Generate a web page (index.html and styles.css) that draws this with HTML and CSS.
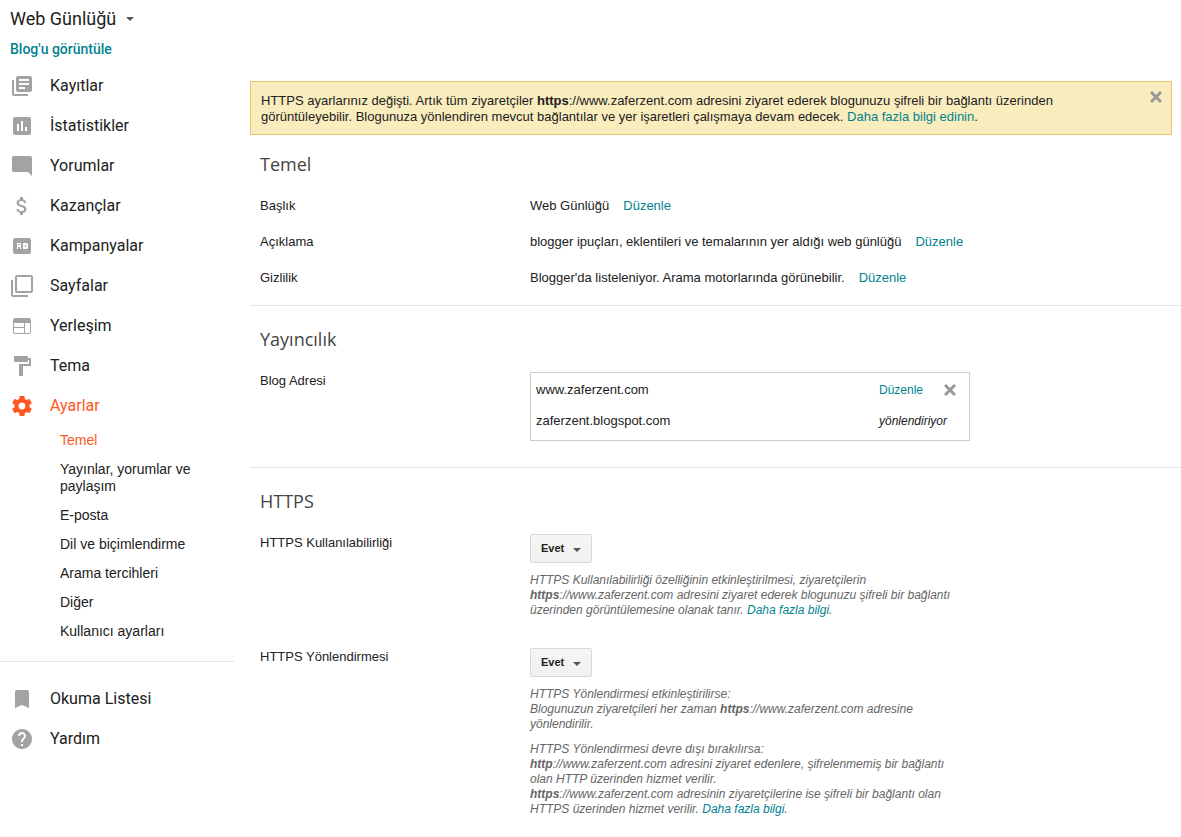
FILE: index.html
```html
<!DOCTYPE html>
<html lang="tr">
<head>
    <meta charset="UTF-8">
    <meta name="viewport" content="width=device-width, initial-scale=1">
    <title>Web Günlüğü - Ayarlar</title>
    <link rel="stylesheet" href="styles.css">
</head>
<body>
<div class="page">
    <!-- sol menü -->
    <aside class="sidebar">
        <button type="button" class="blog-switch">Web Günlüğü<span class="caret"></span></button>
        <a class="view-blog" href="#">Blog'u görüntüle</a>
        <nav>
            <ul class="menu">
                <li><a href="#">
                    <svg class="icon" viewBox="0 0 24 24"><path d="M4 6H2v14c0 1.100.9 2 2 2h14v-2H4V6zm16-4H8c-1.100 0-2 .9-2 2v12c0 1.100.9 2 2 2h12c1.100 0 2-.9 2-2V4c0-1.100-.9-2-2-2zm-1 9H9V9h10v2zm-4 4H9v-2h6v2zm4-8H9V5h10v2z"/></svg>
                    Kayıtlar</a></li>
                <li><a href="#">
                    <svg class="icon" viewBox="0 0 24 24"><path d="M19 3H5c-1.100 0-2 .9-2 2v14c0 1.100.9 2 2 2h14c1.100 0 2-.9 2-2V5c0-1.100-.9-2-2-2zM9 17H7v-7h2v7zm4 0h-2V7h2v10zm4 0h-2v-4h2v4z"/></svg>
                    İstatistikler</a></li>
                <li><a href="#">
                    <svg class="icon" viewBox="0 0 24 24"><path d="M22 4c0-1.100-.9-2-2-2H4c-1.100 0-2 .9-2 2v12c0 1.100.9 2 2 2h14l4 4z"/></svg>
                    Yorumlar</a></li>
                <li><a href="#">
                    <svg class="icon" viewBox="0 0 24 24"><path d="M11.800 10.900c-2.270-.59-3-1.200-3-2.150 0-1.090 1.010-1.850 2.700-1.850 1.780 0 2.440.85 2.500 2.100h2.210c-.07-1.720-1.120-3.300-3.210-3.810V3h-3v2.160c-1.940.42-3.500 1.680-3.500 3.610 0 2.310 1.910 3.460 4.700 4.130 2.500.6 3 1.480 3 2.410 0 .69-.49 1.790-2.700 1.790-2.060 0-2.870-.92-2.980-2.100h-2.200c.12 2.190 1.760 3.420 3.680 3.830V21h3v-2.150c1.950-.37 3.500-1.500 3.500-3.550 0-2.840-2.430-3.810-4.700-4.400z"/></svg>
                    Kazançlar</a></li>
                <li><a href="#">
                    <svg class="icon" viewBox="0 0 24 24"><path fill-rule="evenodd" d="M5 4h14a2 2 0 0 1 2 2v12a2 2 0 0 1-2 2H5a2 2 0 0 1-2-2V6a2 2 0 0 1 2-2zM7 9v6h1v-2h2v2h1V9zm1 1h2v1H8zM13 9v6h4l1-1v-4l-1-1zm2 2h1v2h-1z"/></svg>
                    Kampanyalar</a></li>
                <li><a href="#">
                    <svg class="icon" viewBox="0 0 24 24"><path d="M3 6H1v15c0 1.100.9 2 2 2h15v-2H3V6zM21 1H7c-1.100 0-2 .9-2 2v14c0 1.100.9 2 2 2h14c1.100 0 2-.9 2-2V3c0-1.100-.9-2-2-2zm0 16H7V3h14v14z"/></svg>
                    Sayfalar</a></li>
                <li><a href="#">
                    <svg class="icon" viewBox="0 0 24 24"><path fill-rule="evenodd" d="M19 4H5a2 2 0 0 0-2 2v12a2 2 0 0 0 2 2h14a2 2 0 0 0 2-2V6a2 2 0 0 0-2-2zM4 9h10v4H4zm0 5h10v5H5l-1-1zm11-5h5v9l-1 1h-4z"/></svg>
                    Yerleşim</a></li>
                <li><a href="#">
                    <svg class="icon" viewBox="0 0 24 24"><path d="M18 4V3c0-.55-.45-1-1-1H5c-.55 0-1 .45-1 1v4c0 .55.45 1 1 1h12c.55 0 1-.45 1-1V6h1v4H9v11c0 .55.45 1 1 1h2c.55 0 1-.45 1-1v-9h8V4h-3z"/></svg>
                    Tema</a></li>
                <li class="current"><a href="#">
                    <svg class="icon" viewBox="0 0 24 24"><path d="M19.430 12.980c.04-.32.07-.64.07-.98s-.03-.66-.07-.98l2.110-1.650c.19-.15.24-.42.12-.64l-2-3.460c-.12-.22-.39-.3-.61-.22l-2.490 1c-.52-.4-1.080-.73-1.690-.98l-.38-2.650C14.460 2.180 14.250 2 14 2h-4c-.25 0-.46.18-.49.42l-.38 2.650c-.61.25-1.170.59-1.690.98l-2.490-1c-.23-.09-.49 0-.61.22l-2 3.460c-.13.22-.07.49.12.64l2.110 1.650c-.04.32-.07.65-.07.98s.03.66.07.98l-2.110 1.650c-.19.15-.24.42-.12.64l2 3.460c.12.22.39.3.61.22l2.490-1c.52.4 1.080.73 1.690.98l.38 2.650c.03.24.24.42.49.42h4c.25 0 .46-.18.49-.42l.38-2.650c.61-.25 1.170-.59 1.690-.98l2.490 1c.23.09.49 0 .61-.22l2-3.460c.12-.22.07-.49-.12-.64l-2.110-1.650zM12 15.500c-1.930 0-3.500-1.570-3.500-3.500s1.570-3.500 3.500-3.500 3.500 1.570 3.500 3.500-1.570 3.500-3.500 3.500z"/></svg>
                    Ayarlar</a>
                    <ul class="submenu">
                        <li class="current"><a href="#">Temel</a></li>
                        <li><a href="#">Yayınlar, yorumlar ve paylaşım</a></li>
                        <li><a href="#">E-posta</a></li>
                        <li><a href="#">Dil ve biçimlendirme</a></li>
                        <li><a href="#">Arama tercihleri</a></li>
                        <li><a href="#">Diğer</a></li>
                        <li><a href="#">Kullanıcı ayarları</a></li>
                    </ul>
                </li>
            </ul>
            <ul class="menu menu-extra">
                <li><a href="#">
                    <svg class="icon" viewBox="0 0 24 24"><path d="M17 3H7c-1.100 0-2 .9-2 2v16l7-3 7 3V5c0-1.100-.9-2-2-2z"/></svg>
                    Okuma Listesi</a></li>
                <li><a href="#">
                    <svg class="icon" viewBox="0 0 24 24"><path d="M12 2C6.480 2 2 6.480 2 12s4.480 10 10 10 10-4.480 10-10S17.520 2 12 2zm1 17h-2v-2h2v2zm2.070-7.750l-.9.920C13.450 12.900 13 13.500 13 15h-2v-.5c0-1.100.45-2.100 1.170-2.830l1.240-1.260c.37-.36.59-.86.59-1.410 0-1.100-.9-2-2-2s-2 .9-2 2H8c0-2.210 1.790-4 4-4s4 1.790 4 4c0 .88-.36 1.680-.93 2.250z"/></svg>
                    Yardım</a></li>
            </ul>
        </nav>
    </aside>

    <!-- ayarlar -->
    <main class="content">
        <div class="notice">
            <p>HTTPS ayarlarınız değişti. Artık tüm ziyaretçiler <b>https</b>://www.zaferzent.com adresini ziyaret ederek blogunuzu şifreli bir bağlantı üzerinden görüntüleyebilir. Blogunuza yönlendiren mevcut bağlantılar ve yer işaretleri çalışmaya devam edecek. <a href="#">Daha fazla bilgi edinin</a>.</p>
            <button type="button" class="close" aria-label="Kapat"><svg viewBox="0 0 12 12"><path d="M1 1l10 10M11 1L1 11"/></svg></button>
        </div>

        <section class="group">
            <h2>Temel</h2>
            <div class="row">
                <div class="label">Başlık</div>
                <div class="value">Web Günlüğü<a class="edit" href="#">Düzenle</a></div>
            </div>
            <div class="row">
                <div class="label">Açıklama</div>
                <div class="value">blogger ipuçları, eklentileri ve temalarının yer aldığı web günlüğü<a class="edit" href="#">Düzenle</a></div>
            </div>
            <div class="row">
                <div class="label">Gizlilik</div>
                <div class="value">Blogger'da listeleniyor. Arama motorlarında görünebilir.<a class="edit" href="#">Düzenle</a></div>
            </div>
        </section>

        <section class="group">
            <h2>Yayıncılık</h2>
            <div class="row">
                <div class="label">Blog Adresi</div>
                <div class="control">
                    <table class="address">
                        <tr>
                            <td>www.zaferzent.com</td>
                            <td class="action"><span class="tools"><a href="#">Düzenle</a><button type="button" class="close" aria-label="Kaldır"><svg viewBox="0 0 12 12"><path d="M1 1l10 10M11 1L1 11"/></svg></button></span></td>
                        </tr>
                        <tr>
                            <td>zaferzent.blogspot.com</td>
                            <td class="action"><i>yönlendiriyor</i></td>
                        </tr>
                    </table>
                </div>
            </div>
        </section>

        <section class="group">
            <h2>HTTPS</h2>
            <div class="row">
                <label class="label" for="https-on">HTTPS Kullanılabilirliği</label>
                <div class="control">
                    <div class="select">
                        <select id="https-on"><option>Evet</option><option>Hayır</option></select>
                        <span class="caret"></span>
                    </div>
                    <div class="help">
                        <p>HTTPS Kullanılabilirliği özelliğinin etkinleştirilmesi, ziyaretçilerin <b>https</b>://www.zaferzent.com adresini ziyaret ederek blogunuzu şifreli bir bağlantı üzerinden görüntülemesine olanak tanır. <a href="#">Daha fazla bilgi</a>.</p>
                    </div>
                </div>
            </div>
            <div class="row">
                <label class="label" for="https-redirect">HTTPS Yönlendirmesi</label>
                <div class="control">
                    <div class="select">
                        <select id="https-redirect"><option>Evet</option><option>Hayır</option></select>
                        <span class="caret"></span>
                    </div>
                    <div class="help">
                        <p>HTTPS Yönlendirmesi etkinleştirilirse:<br>
                        Blogunuzun ziyaretçileri her zaman <b>https</b>://www.zaferzent.com adresine yönlendirilir.</p>
                        <p>HTTPS Yönlendirmesi devre dışı bırakılırsa:<br>
                        <b>http</b>://www.zaferzent.com adresini ziyaret edenlere, şifrelenmemiş bir bağlantı olan HTTP üzerinden hizmet verilir.<br>
                        <b>https</b>://www.zaferzent.com adresinin ziyaretçilerine ise şifreli bir bağlantı olan HTTPS üzerinden hizmet verilir. <a href="#">Daha fazla bilgi</a>.</p>
                    </div>
                </div>
            </div>
        </section>
    </main>
</div>
</body>
</html>
```
FILE: styles.css
```css
*{
    margin: 0;
    padding: 0;
    box-sizing: border-box;
}
body{
    background: #fff;
    color: #212121;
    font: 13px/16px "Liberation Sans", Arial, sans-serif;
}
ul{
    list-style: none;
}
a{
    color: #00838f;
    text-decoration: none;
}
button{
    border: none;
    background: none;
    cursor: pointer;
}
.page{
    display: flex;
    align-items: flex-start;
    gap: 16px;
}

/* sol menü */
.sidebar{
    flex: none;
    width: 234px;
    padding-top: 7px;
    font-family: Roboto, sans-serif;
}
.blog-switch{
    display: flex;
    align-items: center;
    gap: 10px;
    padding-left: 10px;
    color: #212121;
    font: 18px/24px Roboto, sans-serif;
}
.caret{
    border: 4px solid transparent;
    border-top-color: #555;
    border-bottom: none;
}
.view-blog{
    display: block;
    margin: 8px 0 7px;
    padding-left: 10px;
    font-size: 14px;
    font-weight: 500;
    line-height: 20px;
}
.menu > li > a{
    display: flex;
    align-items: center;
    gap: 16px;
    height: 40px;
    padding-left: 10px;
    color: #212121;
    font-size: 16px;
}
.icon{
    width: 24px;
    height: 24px;
    fill: #a3a3a3;
}
.menu > .current > a{
    color: #ff5722;
}
.current .icon{
    fill: #ff5722;
}
.submenu{
    display: flex;
    flex-direction: column;
    gap: 12px;
    padding: 6px 30px 21px 60px;
    font: 14px/17px "Liberation Sans", Arial, sans-serif;
}
.submenu a{
    display: block;
    color: #212121;
}
.submenu .current a{
    color: #ff5722;
}
.menu-extra{
    padding-top: 17px;
    border-top: 1px solid #e5e5e5;
}

/* ayarlar */
.content{
    flex: 1;
    min-width: 0;
    padding-top: 81px;
}
.notice{
    display: flex;
    justify-content: space-between;
    align-items: flex-start;
    margin-right: 9px;
    padding: 9px 9px 9px 10px;
    border: 1px solid #f0c36d;
    background: #f9edbe;
}
.notice p{
    max-width: 820px;
    padding: 2px 0 0;
}
.close{
    display: flex;
    width: 12px;
    height: 12px;
}
.close svg{
    width: 12px;
    height: 12px;
    fill: none;
    stroke: #999;
    stroke-width: 3;
}
.group{
    padding: 17px 10px 10px;
}
.group + .group{
    padding-top: 21px;
    border-top: 1px solid #e5e5e5;
}
.group h2{
    margin-bottom: 11px;
    color: #444;
    font: 18px/24px "Open Sans", sans-serif;
}
.row{
    display: flex;
}
.label{
    flex: none;
    width: 270px;
    padding: 11px 0 9px;
}
.value{
    padding: 11px 0 9px;
}
.edit{
    margin-left: 14px;
}
.control{
    flex: 1;
    max-width: 440px;
    padding: 10px 0 16px;
}
.address{
    width: 100%;
    padding: 1px 0 4px;
    border: 1px solid #ccc;
    border-spacing: 0;
}
.address td{
    height: 31px;
    padding-left: 5px;
}
.address .action{
    width: 95px;
    font-size: 12px;
}
.tools{
    display: flex;
    align-items: center;
    gap: 21px;
}
.select{
    display: inline-block;
    position: relative;
    vertical-align: top;
}
.select select{
    display: block;
    width: 62px;
    height: 29px;
    padding: 0 10px 2px;
    border: 1px solid #d8d8d8;
    border-radius: 2px;
    background: linear-gradient(#f5f5f5, #f1f1f1);
    color: #212121;
    font: bold 11px "Liberation Sans", Arial, sans-serif;
    appearance: none;
}
/* ok işareti kutunun üzerinde durur */
.select .caret{
    position: absolute;
    top: 14px;
    right: 11px;
    pointer-events: none;
}
.help{
    padding: 10px 0 4px;
    color: #666;
    font-size: 12px;
    font-style: italic;
    line-height: 15px;
}
.help p + p{
    margin-top: 10px;
}
```
